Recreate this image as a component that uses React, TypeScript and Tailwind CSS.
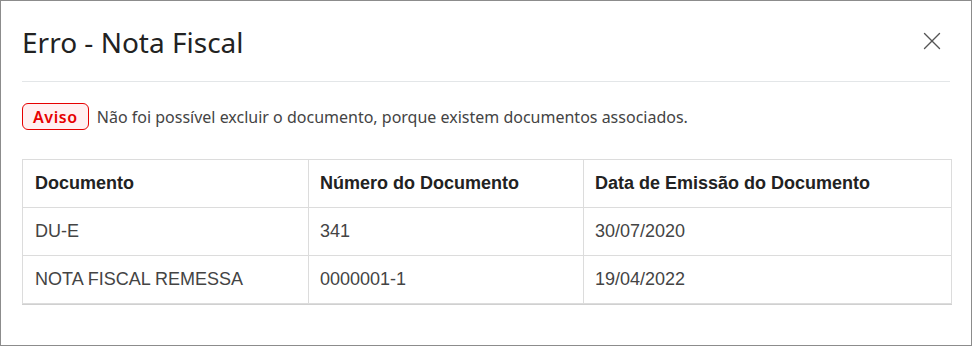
import { X } from "lucide-react";

const rows = [
  { doc: "DU-E", numero: "341", data: "30/07/2020" },
  { doc: "NOTA FISCAL REMESSA", numero: "0000001-1", data: "19/04/2022" },
];

export default function App() {
  return (
    <div className="w-[973px] h-[347px] bg-white">
      <div className="w-[972px] h-[346px] border border-[#8c8c8c] bg-white px-[21px] font-['Noto_Sans',sans-serif]">
        <div className="flex h-[81px] items-center justify-between border-b border-[#e3e6e8]">
          <h1 className="text-[28px] leading-none text-[#222] mt-[1px]">Erro - Nota Fiscal</h1>
          <button className="mr-[3px] text-[#555]">
            <X size={30} strokeWidth={1.1} />
          </button>
        </div>

        <div className="mt-[21px] flex items-center gap-[8px]">
          <span className="flex h-[27px] items-center rounded-[6px] border border-[#e60000] bg-[#fff0f1] px-[10px] text-[16px] font-semibold tracking-[0.6px] text-[#e60000]">
            Aviso
          </span>
          <span className="text-[16px] text-[#444]">
            Não foi possível excluir o documento, porque existem documentos associados.
          </span>
        </div>

        <table className="mt-[29px] w-[930px] border-collapse border border-[#dcdcdc] shadow-[0_1px_0_#d0d0d0] font-['Liberation_Sans',Arial,sans-serif] text-[18px]">
          <thead>
            <tr className="h-[48px] text-left text-[#222]">
              <th className="w-[286px] border border-[#dcdcdc] px-[12px] font-bold">Documento</th>
              <th className="w-[275px] border border-[#dcdcdc] px-[11px] font-bold">Número do Documento</th>
              <th className="border border-[#dcdcdc] px-[11px] font-bold">Data de Emissão do Documento</th>
            </tr>
          </thead>
          <tbody>
            {rows.map((r) => (
              <tr key={r.doc} className="h-[48px] text-[#444]">
                <td className="border border-[#dcdcdc] px-[12px]">{r.doc}</td>
                <td className="border border-[#dcdcdc] px-[11px]">{r.numero}</td>
                <td className="border border-[#dcdcdc] px-[11px]">{r.data}</td>
              </tr>
            ))}
          </tbody>
        </table>
      </div>
    </div>
  );
}
